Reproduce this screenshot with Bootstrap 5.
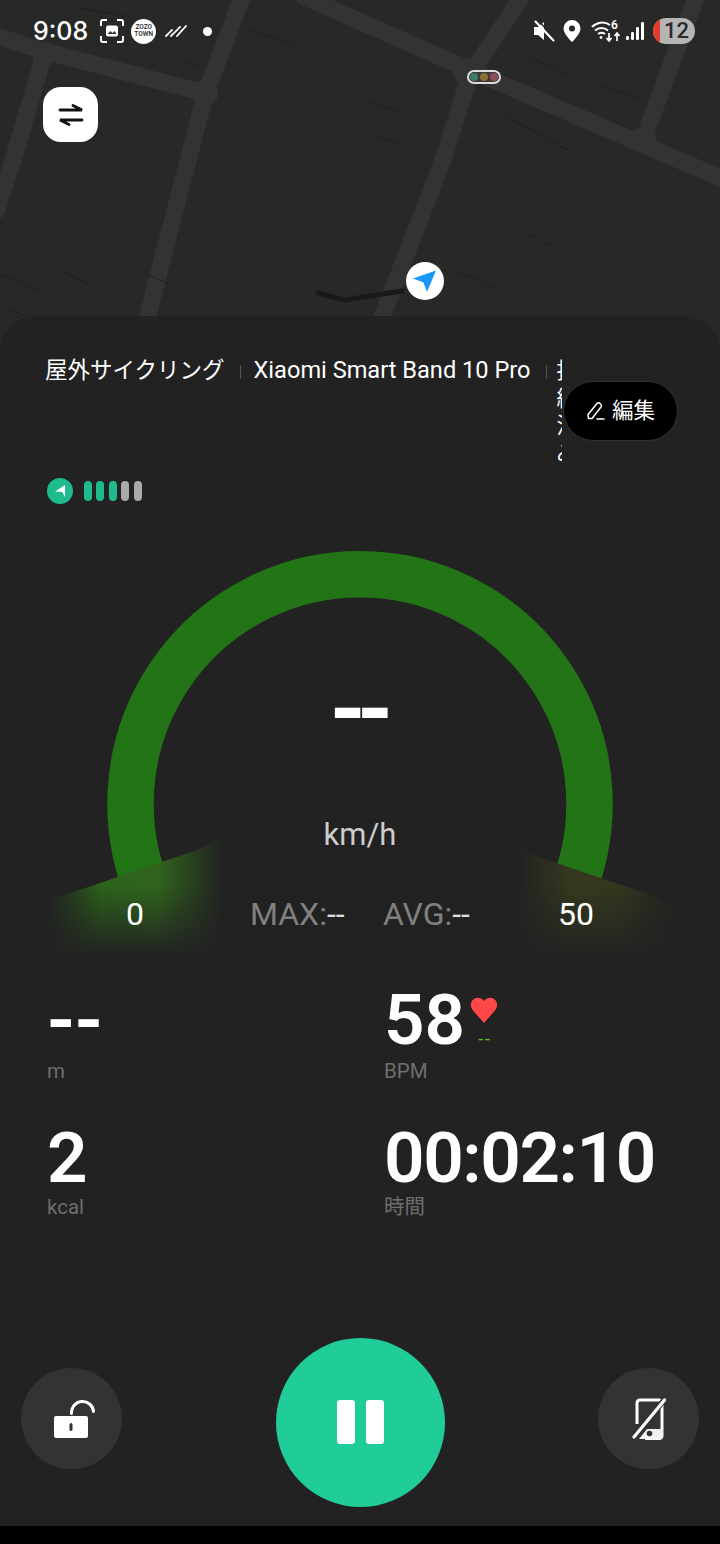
<!DOCTYPE html>
<html lang="ja"><head><meta charset="utf-8">
<link href="https://cdn.jsdelivr.net/npm/bootstrap@5.3.0/dist/css/bootstrap.min.css" rel="stylesheet">
<style>
html,body{margin:0;background:#000;}
body{font-family:Roboto,"Noto Sans CJK JP",sans-serif;color:#fff;overflow:hidden;height:1544px;}
.app-screen{width:720px;height:1526px;background:#222;display:flex;flex-direction:column;overflow:hidden;}
.map-pane{position:relative;height:352px;flex:none;background:#272927;}
.map-art{position:absolute;left:0;top:0;width:720px;height:352px;}
.status-row{position:relative;height:62px;padding:0 25px 0 33px;}
.clock{font-family:Inter,Roboto,sans-serif;font-size:25px;font-weight:500;line-height:1;}
.scan-icon{margin-left:12px;}
.zozo{width:25px;height:25px;margin-left:7px;border-radius:50%;background:#fff;color:#222;font-size:6.5px;line-height:7px;font-weight:500;text-align:center;padding-top:5px;}
.stripes{margin-left:9px;}
.note-dot{width:9px;height:9px;margin-left:16px;}
.batt{width:42px;height:26px;margin-left:7px;border-radius:13px;background:#b5b5b5;color:#2a2a2a;font-size:22px;font-weight:500;overflow:hidden;line-height:26px;text-align:center;padding-left:5px;position:relative;}
.batt-red{position:absolute;left:0;top:0;bottom:0;width:7px;background:#e53a2e;}
.swap-btn{position:relative;margin:25px 0 0 43px;width:55px;height:55px;border-radius:18px;background:#fff;}
.light-chip{position:absolute;left:467px;top:70px;width:34px;height:14px;border-radius:7px;background:#3a3a3a;border:2px solid #ddd;gap:2px;}
.light-dot{width:8px;height:8px;border-radius:50%;}
.nav-pin{position:absolute;left:406px;top:262px;width:38px;height:38px;border-radius:50%;background:#fff;}
.sheet{position:relative;margin-top:-36px;flex:1;background:#222;border-radius:36px 36px 0 0;display:flex;flex-direction:column;}
.tab-row{position:relative;height:145px;}
.tab-strip{position:absolute;left:45px;top:41px;width:517px;height:112px;overflow:hidden;line-height:27px;gap:15px;}
.tab-cjk{font-size:22.5px;white-space:nowrap;flex:none;}
.tab-lat{font-size:23.6px;white-space:nowrap;flex:none;margin-left:-2px;}
.tab-sep{width:1px;height:14px;background:#555;flex:none;margin-top:8px;}
.tab-cut{width:22px;flex:none;font-size:22px;line-height:27.5px;word-break:break-all;margin-left:-5px;}
.edit-pill{position:absolute;left:563px;top:65px;width:115px;height:60px;border-radius:30px;background:#000;border:1px solid #333;font-size:21.500px;gap:6px;}
.signal-row{height:26px;margin:17px 0 0 47px;gap:4.6px;}
.gps-badge{width:26px;height:26px;border-radius:50%;background:#1dbb8e;margin-right:6px;}
.sig-bar{width:8px;height:20px;border-radius:4px;}
.dial{position:relative;height:456px;margin-top:25px;}
.dial-art{position:absolute;left:0;top:0;width:720px;height:456px;}
.dial-dash{position:absolute;left:0;width:720px;top:126px;text-align:center;font-size:92px;font-weight:700;line-height:110px;letter-spacing:-9px;padding-right:6px;}
.dial-unit{position:absolute;left:0;width:720px;top:286px;text-align:center;font-size:31px;line-height:40px;color:#ccc;}
.dial-foot{position:absolute;left:0;top:365px;width:720px;font-size:32px;line-height:40px;}
.dial-min{position:absolute;left:126px;}
.dial-max{position:absolute;left:558px;}
.dial-stat{color:#808080;position:absolute;}
.dial-stat b{color:#ddd;font-weight:400;}
.metric-grid{margin:0;}
.metric-val{font-family:Roboto,sans-serif;font-size:71px;font-weight:600;line-height:70px;}
.metric-dash{font-size:76px;}
.metric-clock{letter-spacing:-1.400px;}
.metric-lab{font-size:20.500px;line-height:26px;color:#6e6e6e;margin-top:3px;}
.row-second .metric-lab{margin-top:1px;}
.heart-box{width:30px;margin-left:5px;margin-top:3px;}
.heart-dash{color:#5cc012;font-size:18px;line-height:10px;letter-spacing:2px;text-align:center;margin-top:11px;}
.col-left{padding:0 0 0 47px;}
.col-right{padding:0 0 0 24px;}
.row-second{padding-top:39px;}
.ctl-row{position:relative;margin-top:auto;height:188px;padding:0 21px 20px 21px;}
.ctl-side{width:101px;height:101px;border-radius:50%;background:#333;margin-top:-7px;}
.ctl-main{width:169px;height:169px;border-radius:50%;background:#20cd98;}
.ctl-bars{gap:11px;}
.ctl-bars i{display:block;width:18px;height:44px;border-radius:3px;background:#fff;}
.lock-svg{margin-left:5px;}
</style></head>
<body>
<div class="app-screen">
  <div class="map-pane">
    <svg class="map-art" viewBox="0 0 720 352" fill="none">
      <g stroke="#333" stroke-width="17" stroke-linejoin="round">
        <path d="M-10 34 L40 50 L205 93"/>
        <path d="M243 -5 L205 95 L144 330"/>
        <path d="M44 55 L13 160 L-5 215"/>
        <path d="M300 -5 L470 70 L725 180"/>
        <path d="M523 -5 L470 75 L443 160 L375 335"/>
        <path d="M697 -5 L645 135"/>
      </g>
      <g fill="#333">
        <circle cx="44" cy="54" r="12"/><circle cx="205" cy="93" r="13"/><circle cx="466" cy="72" r="13"/><circle cx="644" cy="138" r="12"/>
      </g>
      <g stroke="#1e201f" stroke-width="1">
        <path d="M80 8 L125 16M250 30 L295 44M180 60 L205 68M530 58 L570 75M368 100 L400 112M375 135 L400 145M507 117 L568 150M600 85 L640 100M0 275 L40 290M60 270 L90 285M140 272 L172 285M455 270 L500 290M10 310 L60 330M520 230 L560 250"/>
      </g>
      <path d="M318 293 L345 300 L402 291" stroke="#191919" stroke-width="5" stroke-linecap="round"/>
    </svg>
    <div class="status-row d-flex align-items-center">
      <span class="clock">9:08</span>
      <svg class="scan-icon" width="24" height="24" viewBox="0 0 24 24" fill="none" stroke="#fff" stroke-width="2"><path d="M1 7V3a2 2 0 0 1 2-2h4M17 1h4a2 2 0 0 1 2 2v4M23 17v4a2 2 0 0 1-2 2h-4M7 23H3a2 2 0 0 1-2-2v-4"/><rect x="6" y="6.500" width="12" height="11" rx="2" fill="#fff" stroke="none"/><path d="M7.500 15l3-3 2 2 2-2 2 3z" fill="#333" stroke="none"/></svg>
      <div class="zozo">ZOZO<br>TOWN</div>
      <svg class="stripes" width="22" height="14" viewBox="0 0 22 14" stroke="#fff" stroke-width="1.800" stroke-linecap="round" stroke-dasharray="4 1.500"><path d="M1 12L7 6M6 12L15 3M12 12L21 2"/></svg>
      <span class="note-dot rounded-circle bg-white"></span>
      <div class="ms-auto d-flex align-items-center">
        <svg width="22" height="24" viewBox="0 0 22 24"><path d="M1 8h4l6-5v18l-6-5H1z" fill="#fff"/><path d="M2 2l19 20" stroke="#fff" stroke-width="2.200"/><path d="M5 1l18 20" stroke="#272927" stroke-width="1.500"/></svg>
        <svg width="18" height="22" viewBox="0 0 18 22" style="margin-left:8px"><path fill-rule="evenodd" d="M9 0a8.500 8.500 0 0 1 8.500 8.500C17.500 14 9 22 9 22S.5 14 .5 8.500A8.500 8.500 0 0 1 9 0zm0 5.500a3 3 0 1 0 0 6 3 3 0 0 0 0-6z" fill="#fff"/></svg>
        <svg width="30" height="24" viewBox="0 0 30 24" style="margin-left:10px" fill="none" stroke="#fff" stroke-width="2"><path d="M1 8a14 14 0 0 1 18 -2"/><path d="M4 11.500a10 10 0 0 1 13 0"/><path d="M7 15a6 6 0 0 1 7 0"/><circle cx="10" cy="18.500" r="1.400" fill="#fff" stroke="none"/><path d="M18 14v8M15.500 19l2.500 3 2.500-3M26 22v-8M23.500 17l2.500-3 2.500 3" stroke-width="1.700"/><text x="20" y="10" font-size="12" font-family="Roboto" fill="#fff" stroke="none" font-weight="600">6</text></svg>
        <svg width="20" height="20" viewBox="0 0 20 20" style="margin-left:5px" fill="#fff"><rect x="0" y="15" width="3" height="4" rx="1.200"/><rect x="5" y="11" width="3" height="8" rx="1.200"/><rect x="10" y="6" width="3" height="13" rx="1.200"/><rect x="15" y="1" width="3" height="18" rx="1.200"/></svg>
        <div class="batt"><span class="batt-red"></span>12</div>
      </div>
    </div>
    <div class="swap-btn d-flex align-items-center justify-content-center">
      <svg width="26" height="22" viewBox="0 0 26 22" fill="none" stroke="#111" stroke-width="2.800" stroke-linecap="round"><path d="M2 6h22L15 1.500"/><path d="M24 16H2l9 4.500"/></svg>
    </div>
    <div class="light-chip d-flex align-items-center justify-content-center"><span class="light-dot" style="background:#3f7c6a"></span><span class="light-dot" style="background:#8a7234"></span><span class="light-dot" style="background:#8f4f5a"></span></div>
    <div class="nav-pin d-flex align-items-center justify-content-center"><svg width="24" height="24" viewBox="0 0 24 24"><path d="M23 1.500L14 23l-3.500-9.500L0 9.500z" fill="#1b98f5"/></svg></div>
  </div>
  <div class="sheet">
    <div class="tab-row">
      <div class="tab-strip d-flex align-items-start">
        <span class="tab-cjk">屋外サイクリング</span><span class="tab-sep"></span>
        <span class="tab-lat">Xiaomi Smart Band 10 Pro</span><span class="tab-sep"></span>
        <span class="tab-cut">接続済み</span>
      </div>
      <div class="edit-pill d-flex align-items-center justify-content-center">
        <svg width="20" height="20" viewBox="0 0 20 20" fill="none" stroke="#fff" stroke-width="1.500" stroke-linejoin="round" stroke-linecap="round"><path d="M2 13.500L11 2.500a2 2 0 0 1 3 0l.8.7a2 2 0 0 1 0 3L6 17.500H2.500z"/><path d="M11 18h7"/></svg>
        <span>編集</span>
      </div>
    </div>
    <div class="signal-row d-flex align-items-center">
      <div class="gps-badge d-flex align-items-center justify-content-center"><svg width="14" height="14" viewBox="0 0 14 14"><path d="M12 1v12L9 8 2 7.500z" fill="#fff"/></svg></div>
      <span class="sig-bar" style="background:#1dbb8e"></span><span class="sig-bar" style="background:#1dbb8e"></span><span class="sig-bar" style="background:#1dbb8e"></span><span class="sig-bar" style="background:#aaa"></span><span class="sig-bar" style="background:#aaa"></span>
    </div>
    <div class="dial">
      <svg class="dial-art" viewBox="0 0 720 456" fill="none">
        <defs>
          <linearGradient id="glowL" x1="0" x2="1" y1="0" y2="0"><stop offset="0" stop-color="#222"/><stop offset=".3" stop-color="#2c621b"/><stop offset=".62" stop-color="#30641c"/><stop offset="1" stop-color="#222"/></linearGradient>
          <linearGradient id="glowR" x1="0" x2="1" y1="0" y2="0"><stop offset="0" stop-color="#222"/><stop offset=".35" stop-color="#34391d"/><stop offset=".65" stop-color="#33381e"/><stop offset="1" stop-color="#222"/></linearGradient>
          <linearGradient id="fadeDown" x1="0" x2="0" y1="0" y2="1"><stop offset=".45" stop-color="#222" stop-opacity="0"/><stop offset="1" stop-color="#222"/></linearGradient>
        </defs>
        <path d="M149 365A229.500 229.500 0 1 1 571 365" stroke="#237317" stroke-width="46.500"/>
        <path d="M50 371L197 321L222 308V426H50z" fill="url(#glowL)"/>
        <path d="M518 321L651 366L672 376V426H518z" fill="url(#glowR)"/>
        <path d="M222 308L290 290H430L518 321V426H222z" fill="#212121"/>
        <rect x="40" y="300" width="640" height="127" fill="url(#fadeDown)"/>
      </svg>
      <div class="dial-dash">--</div>
      <div class="dial-unit">km/h</div>
      <div class="dial-foot">
        <span class="dial-min">0</span>
        <span class="dial-stat" style="left:250px">MAX:<b>--</b></span>
        <span class="dial-stat" style="left:383px">AVG:<b>--</b></span>
        <span class="dial-max">50</span>
      </div>
    </div>
    <div class="metric-grid row g-0">
      <div class="col-6 col-left"><div class="metric-val metric-dash">--</div><div class="metric-lab">m</div></div>
      <div class="col-6 col-right"><div class="d-flex"><div class="metric-val">58</div><div class="heart-box"><svg width="28" height="27" viewBox="0 0 28 27" class="d-block mt-2"><path d="M14 27L3 14.500C-4 5 8-3 14 5c6-8 18 0 11 9.500z" fill="#ff4747"/></svg><div class="heart-dash">--</div></div></div><div class="metric-lab">BPM</div></div>
      <div class="col-6 col-left row-second"><div class="metric-val">2</div><div class="metric-lab">kcal</div></div>
      <div class="col-6 col-right row-second"><div class="metric-val metric-clock">00:02:10</div><div class="metric-lab">時間</div></div>
    </div>
    <div class="ctl-row d-flex align-items-center justify-content-between">
      <div class="ctl-side d-flex align-items-center justify-content-center"><svg class="lock-svg" width="42" height="40" viewBox="0 0 42 40"><rect x="1" y="17" width="34" height="22" rx="2" fill="#fff"/><rect x="16.500" y="24" width="3" height="8" rx="1.500" fill="#333"/><path d="M18.500 14.500A11 11 0 0 1 40.500 12.500" fill="none" stroke="#fff" stroke-width="3" stroke-linecap="round"/></svg></div>
      <div class="ctl-main d-flex align-items-center justify-content-center"><div class="ctl-bars d-flex"><i></i><i></i></div></div>
      <div class="ctl-side d-flex align-items-center justify-content-center"><svg width="34" height="42" viewBox="0 0 34 42"><path d="M5 26V5a3 3 0 0 1 3-3h19a3 3 0 0 1 3 3v33a2.500 2.500 0 0 1-2.500 2.500H13" fill="none" stroke="#fff" stroke-width="3"/><path d="M7 41L15 31H31V38a3 3 0 0 1-3 3z" fill="#f0f0f0"/><circle cx="17.500" cy="35.500" r="2.800" fill="#333"/><path d="M32 2L2 39" stroke="#333" stroke-width="5.500"/><path d="M32.500 2L2 39" stroke="#fff" stroke-width="3.200" stroke-linecap="round"/></svg></div>
    </div>
  </div>
</div>
<script src="https://cdn.jsdelivr.net/npm/bootstrap@5.3.0/dist/js/bootstrap.bundle.min.js"></script>
</body></html>
